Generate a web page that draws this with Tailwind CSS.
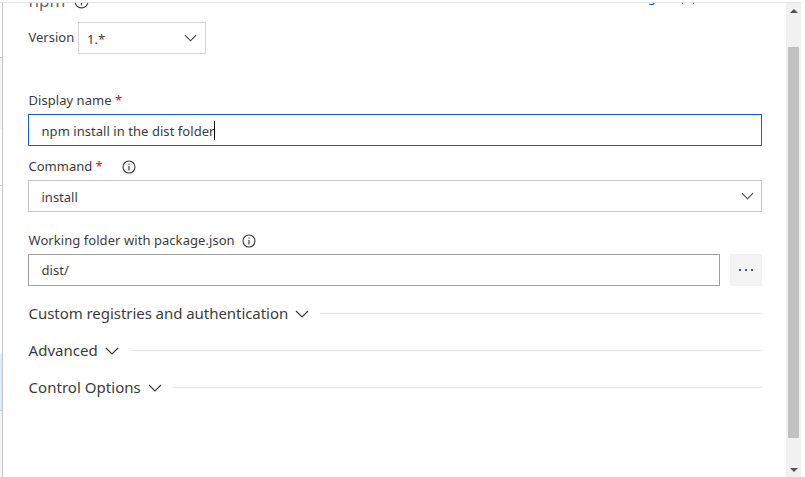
<!DOCTYPE html>
<html lang="en">
<head>
<meta charset="utf-8">
<title>npm task</title>
<script src="https://cdn.jsdelivr.net/npm/@tailwindcss/browser@4"></script>
</head>
<body class="h-[477px] w-[805px] overflow-hidden bg-white font-['Noto_Sans',sans-serif] text-[13px] leading-[18px] text-[#3c3c3c]">
<svg class="hidden">
  <symbol id="chev" viewBox="0 0 14 8"><path d="M1 1l6 6 6-6" fill="none" stroke="currentColor" stroke-width="1.2"/></symbol>
  <symbol id="info" viewBox="0 0 14 14"><circle cx="7" cy="7" r="6" fill="none" stroke="currentColor" stroke-width="1.1"/><path d="M7 6v4.5M7 3.6v1.2" fill="none" stroke="currentColor" stroke-width="1.2"/></symbol>
</svg>
<div class="flex h-[477px] w-[801px] flex-col">
  <div class="mt-0.5 h-px shrink-0 bg-[#e5e5e5]"></div>
  <div class="flex min-h-0 flex-1">
    <aside class="flex w-[3px] shrink-0 flex-col border-r border-[#c4c4c4]">
      <div class="h-[55px] shrink-0 border-b border-[#c8c8c8]"></div>
      <div class="h-[72px] shrink-0 bg-[#f4f4f4]"></div>
      <div class="h-[56px] shrink-0 border-b border-[#c8c8c8]"></div>
      <div class="h-[168px] shrink-0"></div>
      <div class="h-[57px] shrink-0 border-b border-[#c8c8c8] bg-[#deecf9]"></div>
      <div class="flex-1 bg-[#f4f4f4]"></div>
    </aside>
    <main class="flex min-w-0 flex-1 flex-col pr-6 pl-[25.5px]">
      <header class="flex h-[19px] shrink-0 justify-between overflow-hidden">
        <div class="-mt-[14px] flex h-[24px]">
          <span class="text-[17px] leading-[24px] text-[#666]">npm</span>
          <svg class="mt-[4.5px] ml-[9px] size-[15px]"><use href="#info"/></svg>
        </div>
        <div class="-mt-[15px] mr-[68px] flex h-[18px] text-[#0058ad]"><span class="-ml-px">Link settings</span><svg class="mt-[5px] ml-[19px] h-[11px] w-[13px]" viewBox="0 0 13 11"><path d="M1.5 0v11M12.5 0v11" stroke="currentColor" stroke-opacity=".6"/></svg></div>
      </header>
      <div class="-ml-[.5px] flex h-8 shrink-0">
        <label class="w-[50px] pt-[6px] pl-[.5px] whitespace-nowrap">Version</label>
        <div class="flex w-32 items-center justify-between border border-[#d6d6d6] pr-[8.5px] pl-2">
          <span class="pt-[2px]">1.*</span>
          <svg class="h-[8px] w-[13px]"><use href="#chev"/></svg>
        </div>
      </div>
      <label class="mt-[37px] h-[23px] shrink-0 tracking-[.05px]">Display name <span class="text-[#d01020]">*</span></label>
      <div class="-ml-[.5px] flex h-8 shrink-0 items-center border border-[#0f5fd0] pl-[12.5px]"><span class="pt-[2px] tracking-[.05px]">npm install in the dist folder</span><span class="-ml-[.5px] h-[19px] w-px bg-black"></span></div>
      <div class="mt-[11px] flex h-[23px] shrink-0"><label class="whitespace-pre">Command <span class="text-[#d01020]">*</span></label><svg class="mt-[2.5px] ml-[19px] size-[14px]"><use href="#info"/></svg></div>
      <div class="-ml-[.5px] flex h-8 shrink-0 items-center justify-between border border-[#c4c4c4] pr-[7.5px] pl-[12.5px]"><span class="pt-[2px]">install</span><svg class="h-[8px] w-[13px]"><use href="#chev"/></svg></div>
      <div class="mt-[19px] flex h-[23px] shrink-0"><label class="tracking-[.06px]">Working folder with package.json</label><svg class="mt-[2.5px] ml-[7.5px] size-[14px]"><use href="#info"/></svg></div>
      <div class="-ml-[.5px] flex h-8 shrink-0 gap-[10px]">
        <div class="flex flex-1 items-center border border-[#a0a0a0] pl-[12.5px] tracking-[.05px]">dist/</div>
        <div class="flex w-8 items-center justify-center gap-1 bg-[#f3f3f3]"><i class="size-[2px] bg-[#465480]"></i><i class="size-[2px] bg-[#465480]"></i><i class="size-[2px] bg-[#465480]"></i></div>
      </div>
      <section class="mt-[9px] text-[15px]">
        <div class="flex h-[37px] items-center"><span class="pb-[2px] tracking-[-.05px]">Custom registries and authentication</span><svg class="ml-[7px] h-[8px] w-[14px]"><use href="#chev"/></svg><hr class="ml-[11px] flex-1 border-[#e6e6e6]"></div>
        <div class="flex h-[37px] items-center"><span class="pb-[2px] tracking-[.04px]">Advanced</span><svg class="ml-[7px] h-[8px] w-[14px]"><use href="#chev"/></svg><hr class="ml-[11px] flex-1 border-[#e6e6e6]"></div>
        <div class="flex h-[37px] items-center"><span class="pb-[2px] tracking-[.04px]">Control Options</span><svg class="ml-[7px] h-[8px] w-[14px]"><use href="#chev"/></svg><hr class="ml-[11px] flex-1 border-[#e6e6e6]"></div>
      </section>
    </main>
    <div class="flex w-[15px] shrink-0 flex-col items-center bg-[#f1f1f1]">
      <svg class="mt-[6px] h-[4px] w-[8px]" viewBox="0 0 8 4"><path d="M4 0l4 4H0z" fill="#505050"/></svg>
      <div class="mt-[34px] h-[391px] w-[11px] shrink-0 bg-[#c1c1c1]"></div>
      <svg class="mt-[30px] h-[4px] w-[8px]" viewBox="0 0 8 4"><path d="M0 0h8L4 4z" fill="#505050"/></svg>
    </div>
  </div>
</div>
</body>
</html>
